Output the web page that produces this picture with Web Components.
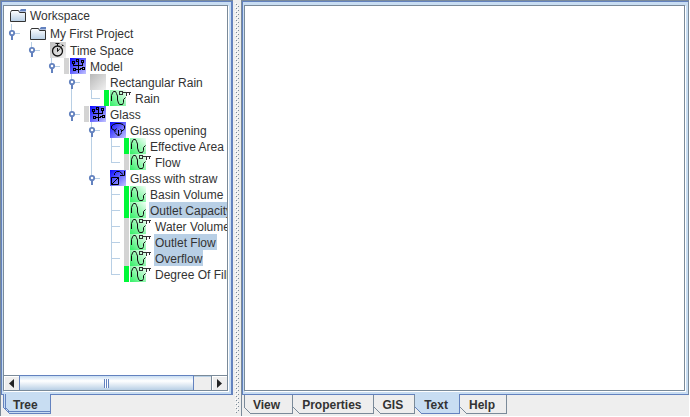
<!DOCTYPE html>
<html lang="en">
<head>
<meta charset="utf-8">
<title>Workspace</title>
<style>
  :root {
    --face: #eeeeee; --edge: #7a8a99; --blue: #6382bf; --band: #c8ddf2;
    --pick: #b8cfe5; --ink: #333333;
  }
  body { margin: 0; background: #fff; color: var(--ink); font: 12px/16px "Liberation Sans", Arial, sans-serif; }
</style>
</head>
<body>
<split-view>
  <tabbed-pane slot="first" variant="tree">
    <scroll-area>
      <tree-node root tall icon="folder" label="Workspace">
        <tree-node branch tall last icon="folder" label="My First Project">
          <tree-node branch last icon="clock" label="Time Space">
            <tree-node branch last icon="model" bar="grey" label="Model">
              <tree-node branch icon="plain" label="Rectangular Rain">
                <tree-node last icon="wavekey" bar="green" label="Rain"></tree-node>
              </tree-node>
              <tree-node branch last icon="model" bar="grey" label="Glass">
                <tree-node branch icon="opening" label="Glass opening">
                  <tree-node icon="wave" bar="green" label="Effective Area"></tree-node>
                  <tree-node last icon="wavekey" bar="grey" label="Flow"></tree-node>
                </tree-node>
                <tree-node branch last icon="straw" label="Glass with straw">
                  <tree-node icon="wave" bar="green" label="Basin Volume"></tree-node>
                  <tree-node icon="wave" bar="green" selected label="Outlet Capacity"></tree-node>
                  <tree-node icon="wavekey" bar="grey" label="Water Volume"></tree-node>
                  <tree-node icon="wavekey" bar="grey" selected label="Outlet Flow"></tree-node>
                  <tree-node icon="wavekey" bar="grey" selected label="Overflow"></tree-node>
                  <tree-node last icon="wavekey" bar="green" label="Degree Of Filling"></tree-node>
                </tree-node>
              </tree-node>
            </tree-node>
          </tree-node>
        </tree-node>
      </tree-node>
    </scroll-area>
    <pane-tab slot="tabs" selected first double>Tree</pane-tab>
  </tabbed-pane>
  <tabbed-pane slot="second" variant="detail">
    <pane-tab slot="tabs" first>View</pane-tab>
    <pane-tab slot="tabs">Properties</pane-tab>
    <pane-tab slot="tabs">GIS</pane-tab>
    <pane-tab slot="tabs" selected>Text</pane-tab>
    <pane-tab slot="tabs">Help</pane-tab>
  </tabbed-pane>
</split-view>

<script>
const gradient = (id, a, b, up) =>
  `<defs><linearGradient id="${id}" x1="0" y1="${up ? 1 : 0}" x2="1" y2="${up ? 0 : 1}"><stop offset="0" stop-color="${a}"/><stop offset="1" stop-color="${b}"/></linearGradient></defs><rect width="16" height="16" fill="url(#${id})"/>`;
const blueTile = gradient('g', '#0808ff', '#c4c4ff');
const waveArt = gradient('g', '#30f064', '#f4fff8', true) +
  '<path d="M1.500 11V5.500L2.500 3 3.500 1.500H5.500L6.500 3.500 7.500 6V10L8.500 13 9.500 14.500H12.500L13.500 12.500V9.500L15.500 7.500" fill="none" stroke="#111"/>';
const art = {
  folder: `<defs><linearGradient id="g" x2="0" y2="1"><stop stop-color="#fff"/><stop offset="1" stop-color="#b8cfe5"/></linearGradient></defs>
    <path d="M.5 14.500V5.500L1.500 3.500H8.500L9.500 5.500H15.500V14.500Z" fill="url(#g)" stroke="#333"/><path d="M9 4.500L11 2H16V4.500Z" fill="#6382bf"/>`,
  clock: gradient('g', '#bdbdbd', '#f2f2f2') +
    '<g fill="none" stroke="#111"><circle cx="7.500" cy="9" r="5" stroke-width="1.300"/><path d="M5.500 1.500H9.500M7.500 1.500V4M11.500 4.500L13 3M12 2.500L13.800 4.300M7.500 9.500L10 6.500M7.500 6V9.500"/></g>',
  model: blueTile + `<g fill="none" stroke="#000" shape-rendering="crispEdges">
    <path d="M2.500 3.500h2v2h-2zM6.500 1.500h2v2h-2zM11.500 2.500h2v2h-2zM3.500 10.500h2v2h-2zM12.500 9.500h2v2h-2z"/>
    <path d="M3.500 6V7.500H12.500V5M8.500 4V15M6 11.500H10.500V10.500H12"/></g>`,
  plain: gradient('g', '#b8b8b8', '#f0f0f0'),
  opening: blueTile + '<path d="M5 8.500L3 7.500 1.500 6.500V4L3.500 2.500 6 1.500H10L13 2.500 14.500 4V6.500L13 8.500H11.500L10.500 7M5 8.500L6.500 6.500M5 8.500V10.500M11.500 8.500V10.500M8.500 8V13.500M5.500 11L8.500 14L11.500 11" fill="none" stroke="#000"/>',
  straw: blueTile + '<path d="M1.500 7.500H8.500V14.500H1.500ZM1.500 14.500L8.500 7.500M4.500 5V3.500L6.500 1.500H9.500L13 4.500M14.500 1V5.500H10" fill="none" stroke="#000"/>',
  wave: waveArt,
  wavekey: waveArt + '<path d="M9.500 1.500h3v3h-3zM13 2.500H21M16.500 3V6M19.500 3V5" fill="none" stroke="#333" shape-rendering="crispEdges"/>'
};

class BaseElement extends HTMLElement {
  constructor() {
    super();
    this.attachShadow({ mode: 'open' });
  }
  connectedCallback() {
    this.shadowRoot.innerHTML = '<style>*{box-sizing:border-box}button{font:inherit;color:inherit;margin:0;border:0;padding:0;background:none}</style>' + this.view();
  }
}

customElements.define('split-view', class extends BaseElement {
  view() {
    return `<style>
      :host { display: grid; grid-template-columns: minmax(0, 233fr) 8px minmax(0, 448fr); height: 100vh; box-sizing: border-box;
        background: var(--face); border: solid #fff; border-width: 0 1px 1px 0; }
      ::slotted(*) { min-width: 0; min-height: 0; }
      .grip { margin: 3px 2px; cursor: col-resize;
        background:
          conic-gradient(from 0deg at 1px 1px, transparent 75%, #fff 0) 0 0 / 4px 4px,
          conic-gradient(from 0deg at 1px 1px, transparent 75%, var(--edge) 0) 1px 1px / 4px 4px,
          conic-gradient(from 0deg at 1px 1px, transparent 75%, #fff 0) 2px 2px / 4px 4px,
          conic-gradient(from 0deg at 1px 1px, transparent 75%, var(--edge) 0) 3px 3px / 4px 4px; }
    </style>
    <slot name="first"></slot><div class="grip" role="separator" aria-orientation="vertical"></div><slot name="second"></slot>`;
  }
});

customElements.define('tabbed-pane', class extends BaseElement {
  view() {
    return `<style>
      :host { display: flex; flex-direction: column; border-top: 1px solid var(--edge); border-left: 1px solid var(--edge); }
      .frame { flex: 1; min-height: 0; display: flex; background: var(--band); border: 1px solid var(--blue); padding: 3px 3px 3px 1px; }
      :host([variant=tree]) .frame { border-right-width: 2px; }
      :host([variant=detail]) .frame { border-right-color: var(--edge); }
      .body { flex: 1; min-width: 0; display: flex; background: #fff; border: 1px solid var(--edge); box-shadow: 1px 1px #fff; }
      .tabs { display: flex; height: 21px; padding: 0 0 2px 2px; }
    </style>
    <div class="frame"><div class="body"><slot></slot></div></div>
    <div class="tabs" role="tablist"><slot name="tabs"></slot></div>`;
  }
});

customElements.define('pane-tab', class extends BaseElement {
  view() {
    const on = this.hasAttribute('selected');
    const double = this.hasAttribute('double');
    return `<style>
      :host { display: flex; position: relative; --line: var(--edge); }
      :host([selected]) { --line: var(--blue); }
      button { font-weight: bold; line-height: 16px; padding: 2px 11px 0 9px; border: solid var(--line); border-width: 0 1px 1px 0; }
      :host([first]) button { padding-left: 8px; padding-right: 12px; border-left-width: 1px; }
      :host([selected]) button { background: var(--band); margin-top: -1px; padding-top: 3px; }
      :host([double]) button { box-shadow: inset 1px -1px var(--band), inset 2px -2px var(--blue); padding-left: 9px; }
      svg { position: absolute; left: 0; bottom: 0; }
    </style>
    <button type="button" role="tab" aria-selected="${on}"><slot></slot></button>
    <svg width="7" height="7" aria-hidden="true"><path d="M0 0L7 7H0Z" fill="var(--face)"/><path d="M0 0L7 7${double ? 'M2 0L7 5' : ''}" stroke="var(--line)"/></svg>`;
  }
});

customElements.define('scroll-area', class extends BaseElement {
  view() {
    return `<style>
      :host { display: flex; flex: 1; min-width: 0; flex-direction: column; }
      .view { flex: 1; min-height: 0; overflow: hidden; white-space: nowrap; }
      .bar { display: flex; height: 15px; border-top: 1px solid var(--edge); background: var(--face); }
      .step { width: 15px; display: grid; place-items: center; box-shadow: inset 1px 1px #fff; }
      .step:last-child { width: 16px; border-left: 1px solid var(--edge); }
      .track { flex: 1; display: flex; box-shadow: inset 0 1px var(--pick); }
      .thumb { width: 91%; margin-top: -1px; display: grid; place-items: center; border: 1px solid var(--blue); border-bottom: 0;
        background: linear-gradient(#c8ddf2, #fff 35%, #b8cfe5); }
      .ridges { width: 5px; height: 9px; background: repeating-linear-gradient(90deg, var(--blue) 0 1px, #fff 1px 2px); }
    </style>
    <div class="view" role="tree"><slot></slot></div>
    <div class="bar">
      <button class="step" type="button" aria-label="Scroll left"><svg width="5" height="9"><path d="M5 0V9L0 4.500Z" fill="#222"/></svg></button>
      <div class="track"><div class="thumb" role="scrollbar" aria-orientation="horizontal" aria-valuenow="0"><div class="ridges"></div></div></div>
      <button class="step" type="button" aria-label="Scroll right"><svg width="5" height="9"><path d="M0 0V9L5 4.500Z" fill="#222"/></svg></button>
    </div>`;
  }
});

customElements.define('tree-node', class extends BaseElement {
  view() {
    const icon = this.getAttribute('icon');
    const branch = this.hasAttribute('branch');
    const width = icon === 'wavekey' ? 21 : 16;
    this.setAttribute('role', 'treeitem');
    const knob = branch ? `<button type="button" aria-label="Collapse ${this.getAttribute('label')}">
      <svg width="8" height="14"><path d="M3 8H5V14H3Z" fill="#6382bf"/><circle cx="4" cy="7" r="2.200" fill="#fff" stroke="#6382bf" stroke-width="1.800"/></svg></button>` : '';
    return `<style>
      :host { display: block; position: relative; --row: 16px; }
      :host([tall]) { --row: 18px; }
      .row { display: flex; align-items: center; height: var(--row); }
      .lead { flex: none; width: 26px; height: 100%; display: flex; align-items: center; justify-content: space-between; padding: 0 1px 0 4px;
        background: linear-gradient(var(--pick), var(--pick)) 7px 50% / 9px 1px no-repeat; }
      :host([root]) .lead { width: 6px; padding: 0; background: none; }
      .line { position: absolute; left: 7px; top: 0; bottom: 0; width: 1px; background: var(--pick); }
      :host([last]) .line { bottom: auto; height: calc(var(--row) / 2); }
      :host([root]) .line { display: none; }
      button { position: relative; width: 8px; height: 14px; }
      svg { display: block; flex: none; }
      .flag { width: 5px; height: 16px; margin-left: auto; background: #d4d4d4; }
      :host([bar=green]) .flag { background: #00f838; }
      .label { margin-left: 3px; padding: 0 1px; height: 16px; line-height: 18px; }
      :host([selected]) .label { background: var(--pick); }
      .kids { margin-left: 20px; }
      :host([root]) .kids { margin-left: 0; }
    </style>
    <div class="line"></div>
    <div class="row"><div class="lead">${knob}${this.hasAttribute('bar') ? '<span class="flag"></span>' : ''}</div>
    <svg width="${width}" height="16" aria-hidden="true">${art[icon]}</svg><span class="label">${this.getAttribute('label')}</span></div>
    <div class="kids" role="group"><slot></slot></div>`;
  }
});
</script>
</body>
</html>
